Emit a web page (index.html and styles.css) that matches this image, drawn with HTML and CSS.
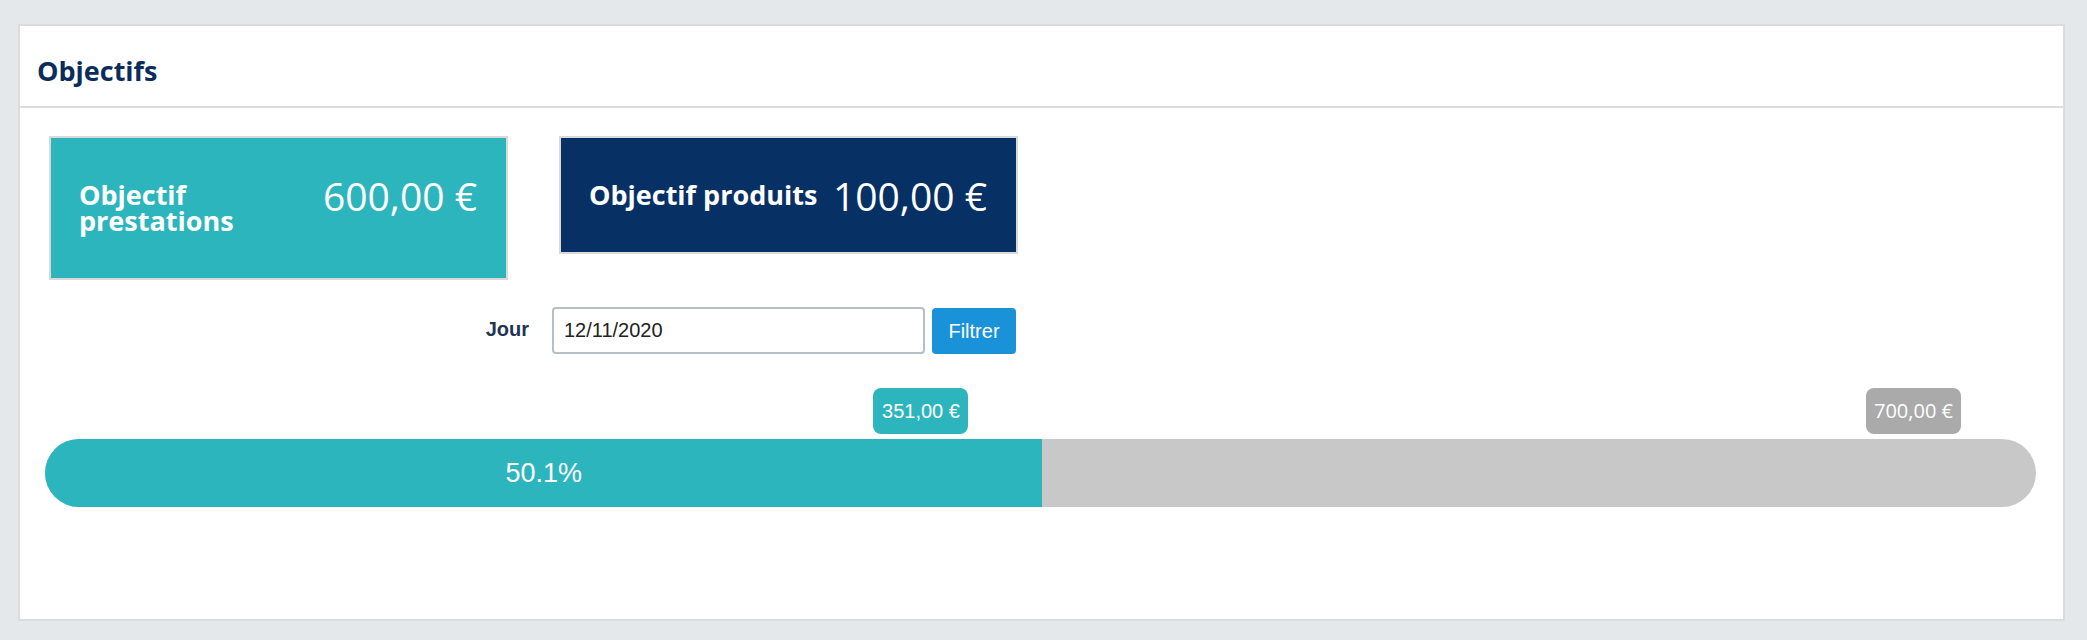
FILE: index.html
```html
<!DOCTYPE html>
<html lang="fr">
<head>
<meta charset="utf-8">
<title>Objectifs</title>
<link rel="stylesheet" href="styles.css">
</head>
<body>
<section class="panel">
  <header class="panel-header">
    <h2 class="panel-title">Objectifs</h2>
  </header>
  <div class="panel-body">
    <div class="cards">
      <div class="card card-teal">
        <h3 class="card-label">Objectif prestations</h3>
        <span class="card-value">600,00 €</span>
      </div>
      <div class="card card-navy">
        <h3 class="card-label card-label-single">Objectif produits</h3>
        <span class="card-value">100,00 €</span>
      </div>
    </div>
    <form class="filter-row">
      <label class="filter-label" for="jour">Jour</label>
      <input class="filter-input" id="jour" type="text" value="12/11/2020">
      <button class="filter-btn" type="button">Filtrer</button>
    </form>
    <div class="progress-wrap">
      <span class="badge badge-teal" style="left: calc(50.1% - 169px);">351,00 €</span>
      <span class="badge badge-gray" style="left: calc(100% - 170px);">700,00 €</span>
      <div class="progress">
        <div class="progress-fill" style="width: 50.1%;">50.1%</div>
      </div>
    </div>
  </div>
</section>
</body>
</html>
```
FILE: styles.css
```css
* { box-sizing: border-box; }

html, body {
  margin: 0;
  padding: 0;
}

body {
  background: #e4e8eb;
  font-family: "Open Sans", "Liberation Sans", sans-serif;
  padding: 24px 22px 19px 18px;
}

.panel {
  background: #ffffff;
  border: 2px solid #dcdcdc;
}

.panel-header {
  height: 82px;
  padding: 25px 17px 15px;
  border-bottom: 2px solid #dcdcdc;
}

.panel-title {
  margin: 0;
  font-size: 27px;
  line-height: 40px;
  font-weight: 700;
  color: #0b2d5b;
}

.panel-body {
  padding: 28px 27px 112px 25px;
}

.cards {
  display: grid;
  grid-template-columns: repeat(4, 459px);
  column-gap: 51px;
  align-items: start;
  padding-left: 4px;
}

.card {
  display: flex;
  justify-content: space-between;
  align-items: flex-start;
  gap: 12px;
  border: 2px solid #d9d9d9;
  padding: 44px 29px 44px 28px;
  color: #ffffff;
}

.card-teal { background: #2db5bd; }
.card-navy { background: #073065; }

.card-label {
  margin: 0;
  font-size: 27px;
  line-height: 26px;
  font-weight: 700;
}

.card-label-single {
  white-space: nowrap;
}

.card-value {
  font-size: 39px;
  line-height: 22px;
  font-weight: 400;
  white-space: nowrap;
  padding-top: 3px;
}

.filter-row {
  display: grid;
  grid-template-columns: 507px 373px 84px;
  margin-top: 27px;
  align-items: start;
  font-family: "Liberation Sans", Arial, sans-serif;
}

.filter-label {
  justify-self: end;
  font-size: 20px;
  font-weight: 700;
  line-height: 28px;
  padding-top: 8px;
  padding-right: 23px;
  color: #1f3552;
}

.filter-input {
  width: 373px;
  height: 47px;
  border: 2px solid #b6bfc6;
  border-radius: 4px;
  padding: 0 10px;
  font-family: "Liberation Sans", Arial, sans-serif;
  font-size: 20px;
  color: #222222;
  background: #ffffff;
  margin: 0;
}

.filter-btn {
  width: 84px;
  height: 46px;
  margin: 1px 0 0 7px;
  border: none;
  border-radius: 4px;
  background: #1a92da;
  color: #ffffff;
  font-family: "Liberation Sans", Arial, sans-serif;
  font-size: 20px;
  padding: 0;
}

.progress-wrap {
  position: relative;
  margin-top: 34px;
  padding-top: 51px;
}

.badge {
  position: absolute;
  top: 0;
  width: 95px;
  height: 46px;
  line-height: 46px;
  border-radius: 8px;
  text-align: center;
  color: #ffffff;
  white-space: nowrap;
}

.badge-teal {
  background: #2db5bd;
  font-family: "Liberation Sans", Arial, sans-serif;
  font-size: 20px;
}

.badge-gray {
  background: #aaaaaa;
  font-family: "Open Sans", sans-serif;
  font-size: 20px;
}

.progress {
  height: 68px;
  border-radius: 34px;
  background: #c8c8c8;
  overflow: hidden;
  display: flex;
}

.progress-fill {
  background: #2db5bd;
  color: #ffffff;
  display: flex;
  align-items: center;
  justify-content: center;
  font-family: "Liberation Sans", Arial, sans-serif;
  font-size: 27px;
}
```
